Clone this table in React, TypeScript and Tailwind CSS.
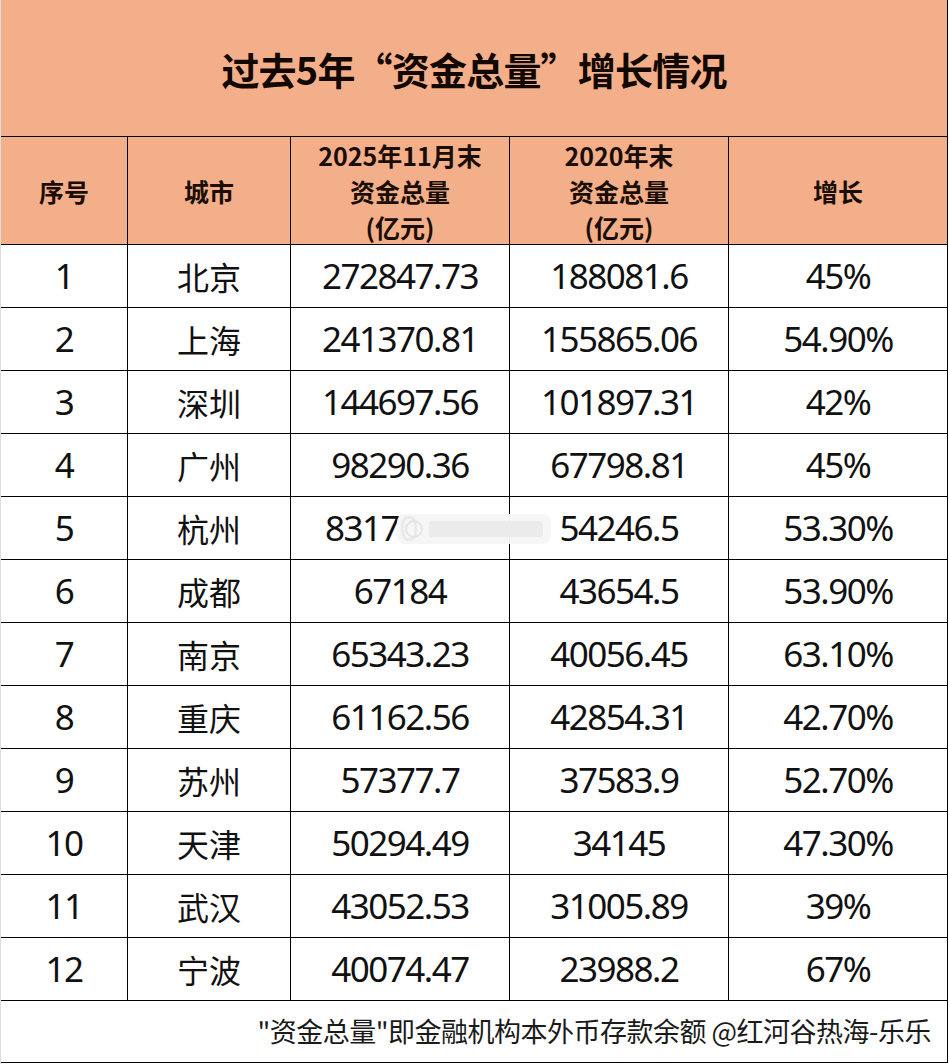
import React from 'react';

const rows: [string, string, string, string, string][] = [
  ['1', '北京', '272847.73', '188081.6', '45%'],
  ['2', '上海', '241370.81', '155865.06', '54.90%'],
  ['3', '深圳', '144697.56', '101897.31', '42%'],
  ['4', '广州', '98290.36', '67798.81', '45%'],
  ['5', '杭州', '83170', '54246.5', '53.30%'],
  ['6', '成都', '67184', '43654.5', '53.90%'],
  ['7', '南京', '65343.23', '40056.45', '63.10%'],
  ['8', '重庆', '61162.56', '42854.31', '42.70%'],
  ['9', '苏州', '57377.7', '37583.9', '52.70%'],
  ['10', '天津', '50294.49', '34145', '47.30%'],
  ['11', '武汉', '43052.53', '31005.89', '39%'],
  ['12', '宁波', '40074.47', '23988.2', '67%'],
];

const num = "font-['Noto_Sans','Noto_Sans_CJK_SC',sans-serif] text-[35px] tracking-[-1.5px] text-[#111]";
const cjk = "font-['Noto_Sans_CJK_SC',sans-serif] text-[32px] text-[#111]";
const head = "font-['Noto_Sans_CJK_SC',sans-serif] font-bold text-[25px] leading-[36px] text-[#1a0d05]";

export default function App() {
  return (
    <div className="w-[949px] h-[1064px] bg-white border-l border-[#dcdcdc] overflow-hidden">
      <div className="w-[947px] border-r border-black">
        {/* Title */}
        <div className="h-[137px] bg-[#f3af89] border-b border-black flex items-center justify-center">
          <h1 className="font-['Noto_Sans_CJK_SC',sans-serif] font-bold text-[38px] tracking-[-0.8px] text-[#120800]">
            过去5年“资金总量”增长情况
          </h1>
        </div>

        {/* Header */}
        <div className="grid grid-cols-[127px_163px_219px_219px_1fr] h-[108px] bg-[#f3af89] border-b border-black">
          <div className={`flex items-center justify-center border-r border-black ${head}`}>序号</div>
          <div className={`flex items-center justify-center border-r border-black ${head}`}>城市</div>
          <div className={`flex flex-col items-center justify-center border-r border-black ${head}`}>
            <span>2025年11月末</span>
            <span>资金总量</span>
            <span>(亿元)</span>
          </div>
          <div className={`flex flex-col items-center justify-center border-r border-black ${head}`}>
            <span>2020年末</span>
            <span>资金总量</span>
            <span>(亿元)</span>
          </div>
          <div className={`flex items-center justify-center ${head}`}>增长</div>
        </div>

        {/* Data rows */}
        {rows.map((r) => (
          <div
            key={r[0]}
            className="grid grid-cols-[127px_163px_219px_219px_1fr] h-[63px] border-b border-black"
          >
            <div className={`flex items-center justify-center border-r border-black ${num}`}>{r[0]}</div>
            <div className={`flex items-center justify-center border-r border-black ${cjk}`}>{r[1]}</div>
            {r[0] === '5' ? (
              <div className={`relative flex items-center pl-[34px] border-r border-black ${num}`}>
                <span>{r[2]}</span>
                <div className="absolute left-[106px] top-[17px] w-[154px] h-[30px] rounded-[8px] bg-[#f5f5f5]/95 flex items-center gap-[6px] px-[8px]">
                  <div className="w-[18px] h-[18px] rounded-full border-2 border-[#e4e4e4]" />
                  <div className="flex-1 h-[16px] bg-[#ebebeb] rounded-[3px]" />
                </div>
              </div>
            ) : (
              <div className={`flex items-center justify-center border-r border-black ${num}`}>{r[2]}</div>
            )}
            <div className={`flex items-center justify-center border-r border-black ${num}`}>{r[3]}</div>
            <div className={`flex items-center justify-center ${num}`}>{r[4]}</div>
          </div>
        ))}

        {/* Footer */}
        <div className="h-[62px] border-b border-black flex items-center justify-end pr-[16px]">
          <p className="font-['Noto_Sans_CJK_SC',sans-serif] text-[27px] tracking-[-0.5px] text-[#1a1a1a]">
            "资金总量"即金融机构本外币存款余额 @红河谷热海-乐乐
          </p>
        </div>
      </div>
    </div>
  );
}
